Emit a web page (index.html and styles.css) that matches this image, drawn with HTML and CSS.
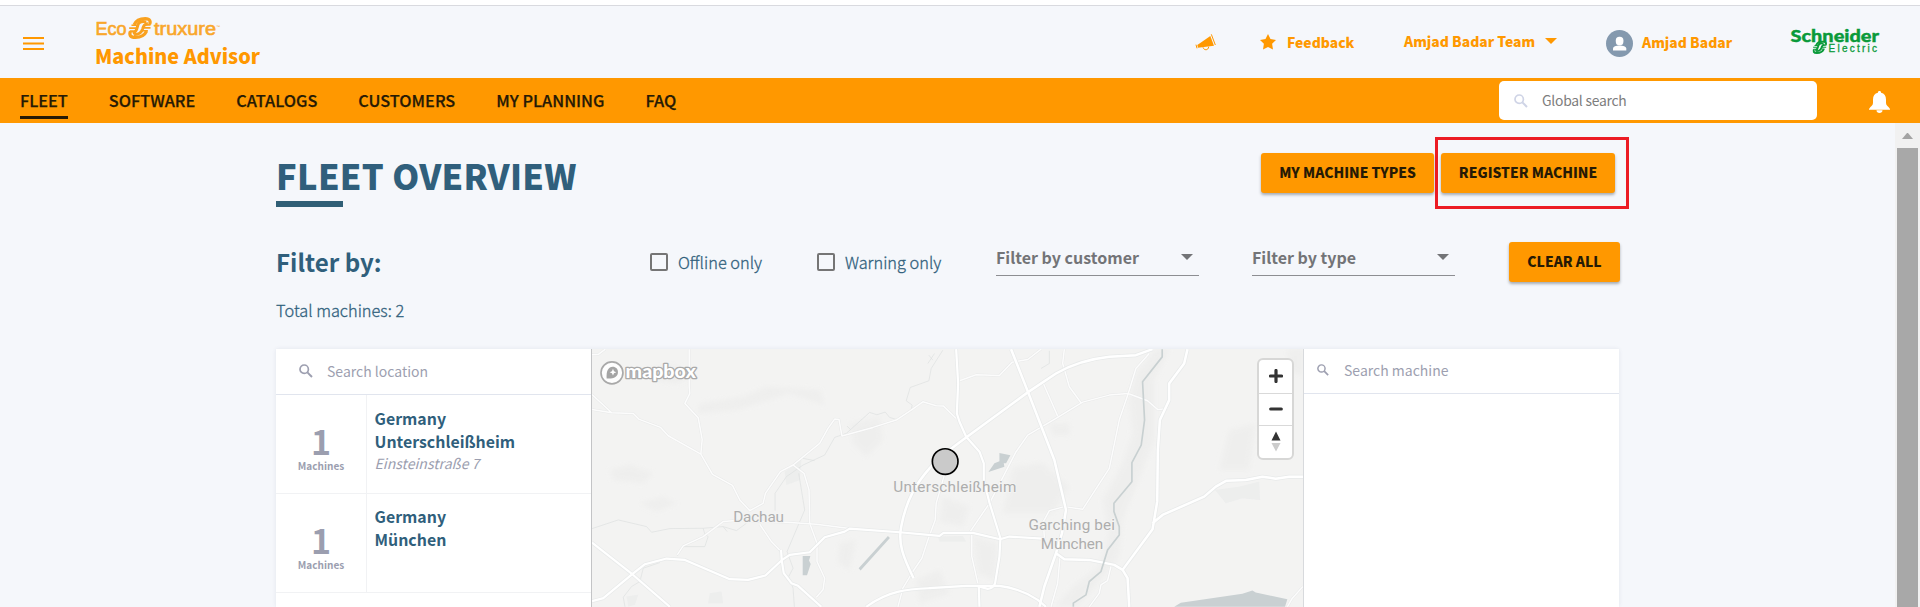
FILE: index.html
```html
<!DOCTYPE html>
<html lang="en">
<head>
<meta charset="utf-8">
<title>Machine Advisor</title>
<link rel="stylesheet" href="styles.css">
</head>
<body>
<svg class="defs" width="0" height="0">
  <defs>
    <symbol id="life" viewBox="0 0 72 67">
      <g fill="none" stroke="currentColor">
        <path stroke-width="10" d="M18 24C24 10 38 5 52 5C67 5 69 14 65 22"/>
        <path stroke-width="10" d="M56 43C50 56 36 62 22 62C5 62 3 53 7 44"/>
        <path stroke-width="9" d="M55 15C38 11 31 18 29 26C27 34 27 44 14 50"/>
        <path stroke-width="9" d="M60 20C50 22 46 28 44 36C41 46 34 54 18 53"/>
        <path stroke-width="5" d="M10 25H30M3 34H28M5 43H24M48 24H68M46 33H68M44 42H60"/>
      </g>
    </symbol>
    <symbol id="magnify" viewBox="0 0 14 14">
      <circle cx="5.2" cy="5.2" r="4.2" fill="none" stroke="currentColor" stroke-width="1.7"/>
      <path d="M8.4 8.4L13 13" fill="none" stroke="currentColor" stroke-width="2"/>
    </symbol>
  </defs>
</svg>

<header class="topbar">
  <svg class="burger" viewBox="0 0 21 13"><path d="M0 1H21M0 6.5H21M0 12H21" stroke="currentColor" stroke-width="1.9"/></svg>
  <div class="brand">
    <svg class="brand-logo" viewBox="0 0 125 22">
      <text x="-.5" y="17.5" textLength="31" lengthAdjust="spacingAndGlyphs">Eco</text>
      <use href="#life" x="32" y="0" width="24" height="22"/>
      <text x="58" y="17.5" textLength="62" lengthAdjust="spacingAndGlyphs">truxure</text>
      <text class="tm" x="120" y="11">™</text>
    </svg>
    <div class="brand-name">Machine Advisor</div>
  </div>
  <div class="tools">
    <svg class="horn" viewBox="0 0 63 51">
      <path fill="currentColor" d="M7 33L46 6L57 35L9 41Z"/>
      <path fill="none" stroke="currentColor" stroke-width="3" d="M49 1L61 33M3 32L6 43M24 40C26 49 40 51 41 38"/>
    </svg>
    <div class="feedback">
      <svg class="star" viewBox="0 0 16 16"><path fill="currentColor" d="M8 0L10.5 5L16 5.9L12.1 9.8L13 15.6L8 13L3 15.6L3.9 9.8L0 5.9L5.5 5Z"/></svg>
      <span>Feedback</span>
    </div>
    <div class="team"><span>Amjad Badar Team</span><i class="caret"></i></div>
    <div class="user">
      <svg class="avatar" viewBox="0 0 27 27">
        <circle cx="13.5" cy="13.5" r="13.5" fill="#8499ae"/>
        <rect x="9.8" y="6.7" width="7.6" height="8.6" rx="3.6" fill="#fff"/>
        <path d="M7 20.4V18.6C7 16.6 10 15.5 13.5 15.5S20.300 16.600 20.300 18.600V20.400Z" fill="#fff"/>
      </svg>
      <span>Amjad Badar</span>
    </div>
    <svg class="schneider" viewBox="0 0 88 28">
      <text class="sch" x="-.5" y="14" textLength="88.500" lengthAdjust="spacingAndGlyphs">Schneider</text>
      <use href="#life" x="21.500" y="12.500" width="14.500" height="13.500"/>
      <text class="ele" x="37.500" y="24.300" textLength="48.500">Electric</text>
    </svg>
  </div>
</header>

<nav class="nav">
  <a class="active">FLEET</a><a>SOFTWARE</a><a>CATALOGS</a><a>CUSTOMERS</a><a>MY PLANNING</a><a>FAQ</a>
  <div class="global-search"><svg><use href="#magnify"/></svg><span>Global search</span></div>
  <svg class="bell" viewBox="0 0 21 22"><path fill="#fff" d="M10.500 0C11.500 0 12.100 .7 12.100 1.700C15.300 2.400 17 5 17 8.500V12C17 14.500 19.500 15.500 21 18V18.700H0V18C1.500 15.500 4 14.500 4 12V8.500C4 5 5.700 2.400 8.900 1.700C8.900 .7 9.500 0 10.500 0ZM7.500 19.200H13.500C13.500 21 12.200 22 10.500 22S7.500 21 7.500 19.200Z"/></svg>
</nav>

<div class="page">
  <main class="content">
    <div class="head">
      <h1>FLEET OVERVIEW</h1>
      <div class="actions">
        <button class="btn types">MY MACHINE TYPES</button>
        <div class="highlight"><button class="btn register">REGISTER MACHINE</button></div>
      </div>
    </div>

    <div class="filters">
      <h2>Filter by:</h2>
      <label class="check offline"><i></i>Offline only</label>
      <label class="check warning"><i></i>Warning only</label>
      <div class="select"><span>Filter by customer</span><i class="caret"></i></div>
      <div class="select type"><span>Filter by type</span><i class="caret"></i></div>
      <button class="btn clear">CLEAR ALL</button>
    </div>
    <p class="total">Total machines: 2</p>

    <div class="board">
      <section class="locations">
        <div class="search"><svg><use href="#magnify"/></svg><span>Search location</span></div>
        <div class="loc">
          <div class="count"><b>1</b><small>Machines</small></div>
          <div class="place"><strong>Germany</strong><strong>Unterschleißheim</strong><em>Einsteinstraße 7</em></div>
        </div>
        <div class="loc">
          <div class="count"><b>1</b><small>Machines</small></div>
          <div class="place"><strong>Germany</strong><strong>München</strong></div>
        </div>
      </section>

      <section class="map">
        <svg class="canvas" viewBox="6 27 2136 774">
          <defs>
            <filter id="soft" x="-20%" y="-20%" width="140%" height="140%"><feGaussianBlur stdDeviation="8"/></filter>
            <g id="minor">
              <path d="M6 163L65 218M6 208L65 218L130 220L148 238L212 262L235 287L333 342L368 403L428 436L450 480L480 512L520 490L527 460L572 395L610 375L690 310L715 265L735 237L748 238L757 288L850 262L920 240L965 210L1000 185L1040 197L1062 198L1100 235"/>
              <path d="M298 27V140L300 160L285 190L325 233L337 298L333 342M6 44L26 42L46 27"/>
              <path d="M610 375L643 400L658 450L660 550L682 610V665L705 715L700 750L680 772M510 553L545 605L574 635L580 660M262 645L280 618L340 590L400 545L440 542L590 547L680 553L780 566"/>
              <path d="M1066 400L1040 490L1037 540L1015 600L997 655L970 695L940 745L925 801"/>
              <path d="M1110 122L1160 104L1230 106L1268 66L1315 58L1355 27M1425 27L1420 70L1440 140L1475 188M1362 130L1405 228M1140 578L1200 490L1280 335L1315 285L1405 232L1480 186L1560 165L1617 160L1675 182L1705 208L1735 206M1680 40L1640 85L1617 160L1590 240L1560 385L1480 508L1425 500L1380 512L1362 545L1365 595"/>
              <path d="M1147 585V650L1165 730M1412 650L1405 730L1385 801M1565 680L1555 722L1535 735L1530 760L1500 801M2142 740L2110 775L2095 801"/>
            </g>
            <g id="major">
              <path d="M6 608L127 703L240 801M6 784L40 775L127 703L165 673L230 656L285 660L350 688L420 718L475 720L527 707L576 661L600 645L660 637L705 592L765 575L780 566L930 577L1050 588L1062 579H1150L1232 598L1260 590L1360 596"/>
              <path d="M574 630L576 661L582 700L605 730L625 738L695 801"/>
              <path d="M1100 27L1106 130L1102 220L1110 245L1130 290L1170 335L1183 370V420L1200 488L1233 595L1230 650L1217 730Q1212 745 1195 747L1168 740L1170 801M830 801C900 750 960 748 1020 745L1130 738H1230Q1290 745 1345 780L1370 801"/>
            </g>
            <g id="trunk">
              <path d="M972 715C940 650 925 610 935 560C950 480 980 430 1020 385Q1050 350 1130 292L1316 156L1400 100Q1470 60 1560 50L1640 45L1690 27"/>
              <path d="M1265 27L1316 156L1360 270L1395 360L1430 510L1418 580L1400 640L1365 740L1350 801M1400 640L1425 658L1500 660L1575 675L1600 690L1615 715L1620 801M1600 690L1690 568L1704 485L1706 330L1712 240L1740 180V130L1785 70L1795 27M1690 550L1720 525L1845 470L1880 440L1912 422L1970 420L2020 410L2060 416L2100 410H2142"/>
            </g>
          </defs>
          <rect x="6" y="27" width="2136" height="774" fill="#f3f3f2"/>
          <g filter="url(#soft)" fill="#ebebea" opacity=".55">
            <path d="M200 80L260 75L300 110L260 130L200 120ZM330 190L460 170L530 140L690 150L705 195L600 160L440 210L320 220ZM60 390L120 375L190 400L160 430L70 420ZM150 490L220 470L260 490L200 515ZM780 250L870 230L880 300L830 350L790 310ZM1060 470L1140 500L1120 560L1050 545ZM980 720L1050 690L1080 760L990 790Z"/>
            <path d="M1740 27L1695 120V300L1640 440L1600 540L1590 650L1500 760L1460 801H1400L1450 740L1530 680L1560 580L1540 480L1600 370L1630 280L1620 180L1640 100L1700 27Z"/>
            <path d="M2095 27H2142V110L2100 90ZM1920 270L2000 250L1980 390H1890ZM1270 380L1360 370L1440 440L1390 520L1240 520ZM1150 590L1225 610L1215 720L1165 700ZM1380 250H1440V285H1390ZM750 610L800 600L780 690L745 670Z"/>
          </g>
          <g fill="#e9ebeb" opacity=".7">
            <path d="M585 395L635 360L630 420L590 435ZM1878 450L1950 440L2010 425L2013 480L1960 475L1910 490ZM1045 590L1120 588L1130 605H1050ZM360 760L395 755L400 790H355ZM110 770L145 765L135 795L115 800Z"/>
          </g>
          <g fill="none" stroke="#dcdfdf" stroke-width="2">
            <path d="M6 566L85 540L170 560L185 577L240 566L340 565L400 560L440 572L470 550M340 565L345 583L355 590L345 620H280L262 648M400 560L412 575M556 512V460L590 410L640 375L705 345L735 292L770 280L840 217L862 224L887 216L900 232L920 238M640 355L675 362M627 400L645 510L592 635L610 685L597 710L610 745L614 801M965 208L968 195L950 182L962 142L1018 122L1025 85L1060 30M1018 45L1030 60M1015 70L1035 40M772 258L782 268M210 668L160 685L150 725L125 740L100 772L105 801M1380 32V70L1355 85"/>
          </g>
          <g fill="none" stroke-linejoin="round">
            <use href="#minor" stroke="#e8e9e9" stroke-width="7.500"/>
            <use href="#minor" stroke="#fcfcfc" stroke-width="4.500"/>
            <use href="#major" stroke="#e8eaea" stroke-width="11"/>
            <use href="#trunk" stroke="#e8eaea" stroke-width="12"/>
            <use href="#major" stroke="#fff" stroke-width="6.500"/>
            <use href="#trunk" stroke="#fff" stroke-width="7.500"/>
          </g>
          <path d="M1719 27V50L1660 125L1666 240L1656 315L1628 368V425L1574 490V515L1590 560V585L1555 630L1535 695L1500 725L1490 765L1452 790V801" fill="none" stroke="#c8d0d1" stroke-width="5"/>
          <g fill="#c9d0d2">
            <path d="M639 648H662L658 662L663 672L652 706H639ZM807 685L895 588L901 594L813 692ZM1197 396L1215 370L1230 364V339L1263 346L1250 370H1243L1245 380ZM1755 801L1775 789L1960 762L1990 752L2000 758L2095 778L2088 801Z"/>
          </g>
          <circle cx="1067" cy="364.500" r="38.500" fill="#cacaca" stroke="#000" stroke-width="5"/>
          <g class="town">
            <text x="430" y="547" textLength="153">Dachau</text>
            <text x="911" y="457" textLength="370">Unterschleißheim</text>
            <text x="1317" y="570" textLength="260">Garching bei</text>
            <text x="1354" y="628" textLength="188">München</text>
          </g>
          <circle cx="66" cy="98" r="33" fill="#fff" fill-opacity=".9" stroke="#a9a9a9" stroke-width="5"/>
          <path d="M50 115C48 92 56 80 68 80C78 80 84 87 84 96C84 109 70 117 50 115Z" fill="#a5a5a5"/>
          <path d="M69 86L72 93L79 96L72 99L69 106L66 99L59 96L66 93Z" fill="#fff"/>
          <text class="mapbox" x="107" y="114" textLength="211" lengthAdjust="spacingAndGlyphs">mapbox</text>
        </svg>
        <div class="zoomer">
          <div><svg viewBox="0 0 14 14"><path d="M7 1.500V12.500M1.500 7H12.500" stroke="#333" stroke-width="3.200" stroke-linecap="round"/></svg></div>
          <div><svg viewBox="0 0 14 14"><path d="M1.700 7H12.300" stroke="#333" stroke-width="3.200" stroke-linecap="round"/></svg></div>
          <div><svg class="compass" viewBox="0 0 10 21"><path d="M5 .5L9.500 9.500H.5Z" fill="#333"/><path d="M.5 12H9.500L5 20.500Z" fill="#ccc"/></svg></div>
        </div>
      </section>

      <section class="machines">
        <div class="search"><svg><use href="#magnify"/></svg><span>Search machine</span></div>
      </section>
    </div>
  </main>
  <aside class="scrollbar"><i class="up"></i><div class="thumb"></div></aside>
</div>
</body>
</html>
```
FILE: styles.css
```css
* { box-sizing: border-box; }

body {
  margin: 0;
  height: 607px;
  overflow: hidden;
  display: flex;
  flex-direction: column;
  background: #f5f7fb;
  font-family: "Noto Sans CJK SC", "Open Sans", sans-serif;
  color: #305f7c;
}

svg { display: block; flex: none; }
h1, h2, p { margin: 0; }
i { display: block; }
.defs { position: absolute; }

/* Top bar */
.topbar {
  flex: none;
  height: 78px;
  border-top: 5px solid #fff;
  box-shadow: inset 0 1px #d9dadf;
  display: flex;
  color: #ff9800;
}
.burger { width: 21px; height: 13px; margin: 32px 0 0 23px; }
.brand { margin: 12px 0 0 51px; }
.brand-logo {
  width: 125px;
  height: 22px;
  margin-left: 1px;
  color: #f9a11f;
  fill: #f9a72b;
  overflow: visible;
  font: 400 17.500px "Liberation Sans", sans-serif;
}
.brand-logo text { stroke: #f9a72b; stroke-width: .6px; }
.brand-logo .tm { font-size: 4px; stroke: none; }
.brand-name { margin-top: 7px; font-weight: 900; font-size: 19.800px; line-height: 20px; }

.tools {
  margin-left: auto;
  padding: 1px 41px 0 0;
  display: flex;
  align-items: center;
  font-weight: 900;
  font-size: 13.900px;
  line-height: 20px;
}
.horn { width: 21px; height: 17px; margin-right: 44px; }
.feedback, .team, .user { display: flex; align-items: center; }
.star { width: 16px; height: 16px; margin-right: 11px; }
.feedback { width: 144px; }
.team { width: 202px; padding-bottom: 2px; }
.caret { border: 6px solid transparent; border-top: 6px solid currentColor; border-bottom: 0; }
.team .caret { margin-left: 10px; }
.avatar { width: 27px; height: 27px; margin: 2px 9px 0 0; }
.user { width: 185px; }
.schneider { width: 88px; height: 28px; color: #0a9a3a; fill: #0a9a3a; overflow: visible; }
.sch { font: 900 17.500px Lato, sans-serif; stroke: #0a9a3a; stroke-width: .4px; }
.ele { font: 400 10px "Liberation Sans", sans-serif; stroke: #0a9a3a; stroke-width: .3px; }

/* Navigation */
.nav {
  flex: none;
  height: 45px;
  padding: 0 30px 0 20px;
  background: #ff9800;
  color: #261a05;
  display: flex;
  align-items: flex-start;
  font-weight: 500;
  font-size: 16.300px;
  line-height: 24px;
}
.nav a { margin: 10px 41px 0 0; height: 31px; -webkit-text-stroke: .25px; }
.nav .active { border-bottom: 3px solid #261a05; }
.global-search {
  margin: 3px 52px 0 auto;
  width: 318px;
  height: 39px;
  padding-left: 15px;
  border-radius: 5px;
  background: #fff;
  color: #7d7d7d;
  display: flex;
  align-items: center;
  font-weight: 400;
  font-size: 13.900px;
  letter-spacing: -.25px;
}
.global-search svg { width: 14px; height: 14px; margin-right: 14px; color: #cfd4e6; }
.global-search span { padding-bottom: 1px; }
.bell { width: 21px; height: 22px; margin-top: 13px; }

/* Page */
.page { flex: 1; display: flex; min-height: 0; }
.content { flex: 1; padding: 30px 275px 0 276px; display: flex; flex-direction: column; min-width: 0; }
.head { flex: none; display: flex; height: 54px; justify-content: space-between; }
h1 {
  padding: 2px 0 0 0;
  font-weight: 900;
  font-size: 34.400px;
  line-height: 40px;
  letter-spacing: .28px;
  white-space: nowrap;
}
h1::after { content: ""; display: block; width: 67px; height: 6px; margin-top: 6px; background: #305f76; }
.actions { display: flex; align-items: flex-start; margin-right: -9px; }
.btn {
  border: 0;
  padding: 0 0 1px;
  height: 40px;
  border-radius: 3px;
  background: #ff9800;
  color: #261a05;
  box-shadow: 0 2px 3px rgba(40, 50, 60, .38);
  font: 900 13.900px/39px "Noto Sans CJK SC", sans-serif;
  white-space: nowrap;
}
.types { width: 173px; }
.highlight { margin: -16px 0 0 1px; border: 3px solid #ec1c24; padding: 13px 11px 13px 3px; }
.register { width: 174px; display: block; }

.filters { flex: none; display: flex; align-items: center; margin-top: 35px; height: 40px; }
h2 { width: 374px; font-weight: 700; font-size: 24.100px; line-height: 30px; }
.check, .total { font-weight: 300; font-size: 16.350px; line-height: 20px; -webkit-text-stroke: .3px; }
.check { display: flex; align-items: center; padding-bottom: 1px; }
.check i { width: 18px; height: 18px; border: 2px solid #757575; border-radius: 2px; margin: 1px 10px 0 0; }
.offline { width: 167px; }
.warning { width: 179px; }
.select {
  align-self: flex-start;
  width: 203px;
  height: 37px;
  margin: -3px 53px 0 0;
  padding-right: 6px;
  border-bottom: 1px solid #8d8e92;
  display: flex;
  align-items: center;
  justify-content: space-between;
  color: #737477;
  font-weight: 700;
  font-size: 16px;
}
.type { margin-right: 54px; }
.clear { width: 111px; flex: none; }
.total { margin-top: 18px; }

/* Board */
.board { flex: 1; min-height: 0; display: flex; width: 1343px; margin-top: 29px; background: #fff; box-shadow: 0 0 4px rgba(60, 80, 110, .1); }
.locations { width: 315px; }
.search { display: flex; align-items: center; color: #9d9fb0; font-size: 14px; line-height: 20px; }
.locations .search { height: 46px; border-bottom: 1px solid #e1e5ee; padding: 0 0 1px 23px; }
.locations .search svg { width: 14px; height: 14px; margin-right: 14px; }
.loc { display: flex; height: 99px; border-bottom: 1px solid #f1f2f4; }
.count { width: 91px; border-right: 1px solid #f1f2f4; padding-top: 31px; display: flex; flex-direction: column; align-items: center; color: #9b9eaf; }
.count b { font-size: 34px; line-height: 30px; }
.count small { margin-top: 3.500px; font-weight: 700; font-size: 10px; line-height: 12px; }
.place { padding: 11.500px 0 0 7.500px; display: flex; flex-direction: column; }
.loc + .loc .place { padding-top: 10.500px; }
.place strong { font-size: 15.900px; line-height: 23px; }
.place em { font-size: 14.100px; line-height: 21px; color: #9b9eaf; }

.map { position: relative; width: 713px; border-left: 1px solid #c3c4c6; border-right: 1px solid #d8dadd; background: #f3f3f2; }
.canvas { width: 711px; height: 258px; }
.town { font: 400 46px Roboto, sans-serif; fill: #adadad; stroke: #f5f5f4; stroke-width: 5px; paint-order: stroke; }
.mapbox { font: 900 56px Lato, sans-serif; fill: #fff; stroke: #aaa; stroke-width: 8px; paint-order: stroke; stroke-linejoin: round; }
.zoomer {
  position: absolute;
  top: 9px;
  right: 9px;
  width: 37px;
  height: 102px;
  border: 2px solid #d7d7d6;
  border-radius: 6px;
  background: #fff;
}
.zoomer div { height: 32.600px; display: flex; align-items: center; justify-content: center; }
.zoomer div + div { border-top: 1px solid #d9d9d9; }
.zoomer svg { width: 14px; height: 14px; }
.zoomer .compass { width: 10px; height: 21px; }

.machines { width: 315px; }
.machines .search { height: 45px; padding: 0 0 2px 13px; border-bottom: 1px solid #e1e5ee; }
.machines .search svg { width: 12px; height: 12px; margin-right: 15px; }

/* Scrollbar */
.scrollbar { width: 25px; background: #f1f1f1; padding: 10px 2px 0; display: flex; flex-direction: column; }
.up { flex: none; margin-left: 5px; margin-bottom: 9px; width: 11px; border: 5.500px solid transparent; border-bottom: 6px solid #a3a3a3; border-top: 0; }
.thumb { flex: 1; background: #a8a8a8; }
```
